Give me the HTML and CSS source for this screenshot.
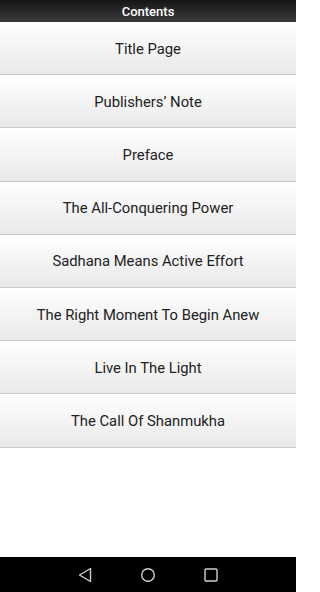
FILE: index.html
```html
<!DOCTYPE html>
<html>
<head>
<meta charset="utf-8">
<link rel="stylesheet" href="styles.css">
</head>
<body>
<div class="screen">
  <header class="bar">Contents</header>
  <ul class="toc">
    <li class="item">Title Page</li>
    <li class="item">Publishers’ Note</li>
    <li class="item">Preface</li>
    <li class="item">The All-Conquering Power</li>
    <li class="item">Sadhana Means Active Effort</li>
    <li class="item">The Right Moment To Begin Anew</li>
    <li class="item">Live In The Light</li>
    <li class="item">The Call Of Shanmukha</li>
  </ul>
  <div class="spacer"></div>
  <nav class="navbar">
    <svg class="nav-icon" width="16" height="16" viewBox="0 0 16 16"><path d="M13.5 1.5 L2.5 8 L13.5 14.5 Z" fill="none" stroke="#cfcfcf" stroke-width="1.4" stroke-linejoin="round"/></svg>
    <svg class="nav-icon" width="16" height="16" viewBox="0 0 16 16"><circle cx="8" cy="8" r="6.3" fill="none" stroke="#cfcfcf" stroke-width="1.4"/></svg>
    <svg class="nav-icon" width="16" height="16" viewBox="0 0 16 16"><rect x="2" y="2" width="12" height="12" rx="1" fill="none" stroke="#cfcfcf" stroke-width="1.4"/></svg>
  </nav>
</div>
</body>
</html>
```
FILE: styles.css
```css
html, body {
  margin: 0;
  padding: 0;
  background: #fff;
}
.screen {
  width: 296px;
  height: 592px;
  display: flex;
  flex-direction: column;
  font-family: Roboto, "Noto Sans", sans-serif;
}
.bar {
  height: 22px;
  flex: none;
  background: linear-gradient(#161616, #3c3c3c);
  color: #fff;
  font-size: 13px;
  font-weight: 500;
  display: flex;
  align-items: center;
  justify-content: center;
  line-height: 1;
}
.toc {
  list-style: none;
  margin: 0;
  padding: 0;
  flex: none;
}
.item {
  box-sizing: border-box;
  height: 53.2px;
  padding-top: 1px;
  border-bottom: 1px solid #c9c9c9;
  background: linear-gradient(#ffffff, #e9e9e9);
  color: #222;
  font-size: 14.8px;
  display: flex;
  align-items: center;
  justify-content: center;
}
.spacer {
  flex: 1;
}
.navbar {
  height: 35px;
  flex: none;
  background: #000;
  display: flex;
  align-items: center;
  justify-content: center;
  gap: 47px;
}
.nav-icon {
  display: block;
}
```
